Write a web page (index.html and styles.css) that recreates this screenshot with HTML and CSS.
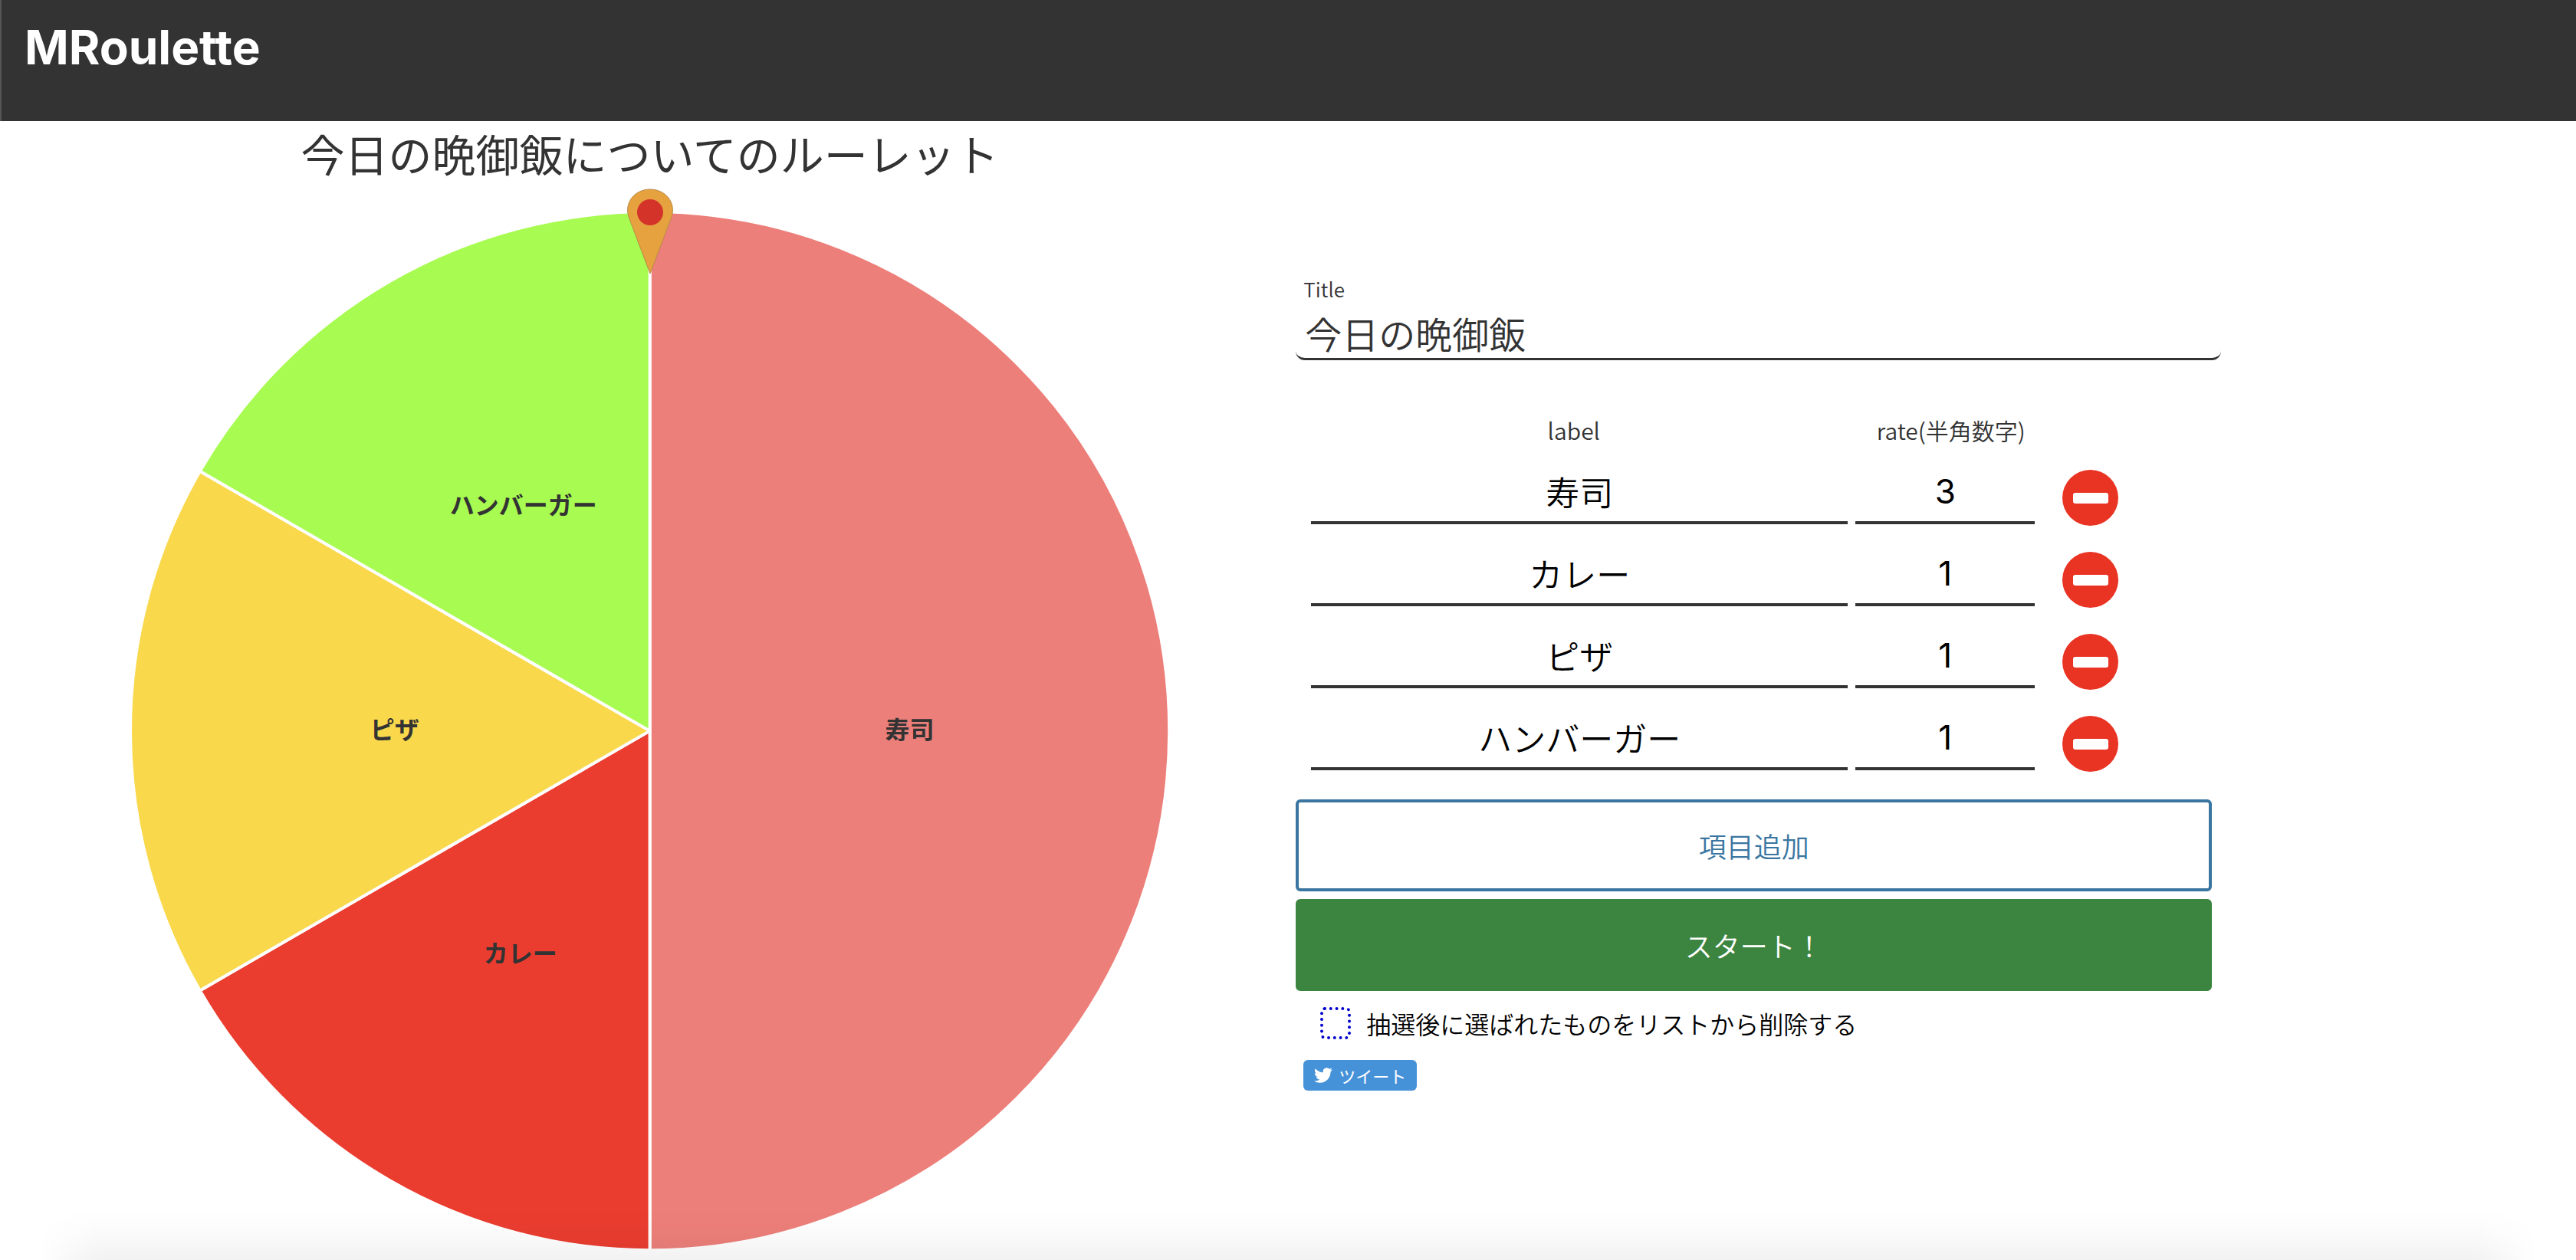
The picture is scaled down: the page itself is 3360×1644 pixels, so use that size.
FILE: index.html
```html
<!DOCTYPE html>
<html lang="ja">
<head>
<meta charset="utf-8">
<meta name="viewport" content="width=device-width, initial-scale=1">
<title>MRoulette</title>
<link rel="stylesheet" href="styles.css">
</head>
<body>
<header class="site-header"><h1 class="brand">MRoulette</h1></header>
<main class="layout">
  <section class="roulette">
    <h2 class="roulette-title">今日の晩御飯についてのルーレット</h2>
    <div class="wheel-box">
      <svg class="wheel" viewBox="0 0 1356 1356" role="img" aria-label="ルーレット">
        <g stroke="#fff" stroke-width="4" stroke-linejoin="bevel">
          <path fill="#ed7f7a" d="M678 678V0A678 678 0 0 1 678 1356Z"/>
          <path fill="#ea3d30" d="M678 678V1356A678 678 0 0 1 90.800 1017Z"/>
          <path fill="#f9d84c" d="M678 678L90.800 1017A678 678 0 0 1 90.800 339Z"/>
          <path fill="#a8fb50" d="M678 678L90.800 339A678 678 0 0 1 678 0Z"/>
        </g>
        <g class="wheel-label">
          <text x="1017" y="688">寿司</text>
          <text x="509" y="981">カレー</text>
          <text x="345" y="688">ピザ</text>
          <text x="513" y="395">ハンバーガー</text>
        </g>
      </svg>
      <svg class="pin" viewBox="0 0 62 112" aria-hidden="true">
        <path d="M31 111L3 37C-3 18 11 1 31 1S65 18 59 37Z" fill="#e5a23e" stroke="#b98a4a" stroke-width="1"/>
        <circle cx="31" cy="31" r="17" fill="#d4332a"/>
      </svg>
    </div>
  </section>
  <form class="settings">
    <label class="title-label" for="title">Title</label>
    <input class="title-input" id="title" type="text" value="今日の晩御飯">
    <table class="items">
      <thead><tr><th class="col-label" scope="col">label</th><th class="col-rate" scope="col">rate(半角数字)</th><td class="col-remove"></td></tr></thead>
      <tbody>
        <tr><td><input class="item-input" type="text" aria-label="label" value="寿司"></td><td><input class="item-input item-rate" type="text" aria-label="rate" value="3"></td><td><button class="remove" type="button" aria-label="削除"></button></td></tr>
        <tr><td><input class="item-input" type="text" aria-label="label" value="カレー"></td><td><input class="item-input item-rate" type="text" aria-label="rate" value="1"></td><td><button class="remove" type="button" aria-label="削除"></button></td></tr>
        <tr><td><input class="item-input" type="text" aria-label="label" value="ピザ"></td><td><input class="item-input item-rate" type="text" aria-label="rate" value="1"></td><td><button class="remove" type="button" aria-label="削除"></button></td></tr>
        <tr><td><input class="item-input" type="text" aria-label="label" value="ハンバーガー"></td><td><input class="item-input item-rate" type="text" aria-label="rate" value="1"></td><td><button class="remove" type="button" aria-label="削除"></button></td></tr>
      </tbody>
    </table>
    <button class="btn btn-add" type="button">項目追加</button>
    <button class="btn btn-start" type="button">スタート！</button>
    <label class="option"><input class="option-check" type="checkbox">抽選後に選ばれたものをリストから削除する</label>
    <a class="tweet" href="#tweet"><svg class="bird" viewBox="0 0 24 24" aria-hidden="true"><path fill="#fff" d="M23.950 4.570a10 10 0 0 1-2.820.770 4.960 4.960 0 0 0 2.160-2.720c-.950.550-2 .950-3.130 1.180a4.920 4.920 0 0 0-8.380 4.480C7.690 8.090 4.070 6.130 1.640 3.160a4.820 4.820 0 0 0-.660 2.470c0 1.710.870 3.210 2.190 4.100a4.900 4.900 0 0 1-2.230-.620v.060a4.920 4.920 0 0 0 3.950 4.830 5 5 0 0 1-2.210.080 4.940 4.940 0 0 0 4.600 3.420A9.870 9.870 0 0 1 0 19.540a14 14 0 0 0 7.550 2.210c9.050 0 14-7.500 14-13.980 0-.210 0-.420-.020-.630a9.940 9.940 0 0 0 2.460-2.550z"/></svg>ツイート</a>
  </form>
</main>
<div class="bottom-shade"></div>
</body>
</html>
```
FILE: styles.css
```css
* { box-sizing: border-box; }

body {
  margin: 0;
  background: #fff;
  color: #333;
  font-family: "Noto Sans CJK JP", sans-serif;
}

.site-header {
  height: 158px;
  padding: 24px 30px;
  background: #333;
  border-left: 2px solid #555;
}

.brand {
  margin: 0;
  color: #fff;
  font: 700 62px/76px Inter, sans-serif;
}

.layout {
  display: grid;
  grid-template-columns: 50.1% 36.1%;
  padding-left: 8px;
}

.roulette-title {
  margin: 0;
  font-size: 57px;
  font-weight: 400;
  line-height: 82px;
  text-align: center;
}

.wheel-box {
  position: relative;
  padding-top: 36px;
}

.wheel {
  display: block;
  width: 80.7%;
  margin: 0 auto;
}

.wheel-label {
  fill: #333;
  font-size: 32px;
  font-weight: 700;
  text-anchor: middle;
}

.pin {
  position: absolute;
  top: 6px;
  left: 50%;
  width: 62px;
  margin-left: -31px;
}

.settings {
  padding: 199px 0 0 3px;
}

.title-label {
  display: block;
  padding-left: 10px;
  font-size: 26px;
  font-weight: 350;
  line-height: 40px;
}

.title-input {
  display: block;
  width: 100%;
  height: 73px;
  padding: 4px 12px 0;
  border: 0;
  border-bottom: 3px solid #333;
  border-radius: 12px;
  background: none;
  color: #333;
  font: 350 48px/66px "Noto Sans CJK JP", sans-serif;
}

.items {
  width: 89.3%;
  margin: 66px 0 19px 15px;
  border-collapse: collapse;
  table-layout: fixed;
}

.items th,
.items td { padding: 0 5px; }

.items th {
  height: 60px;
  padding-bottom: 10px;
  font-size: 30px;
  font-weight: 350;
  line-height: 50px;
}

.items .col-label { padding-right: 20px; }

.items .col-rate {
  width: 244px;
  padding-left: 20px;
}

.col-remove { width: 124px; }

.item-input {
  display: block;
  width: 100%;
  height: 80px;
  margin: 8px 0 20px;
  padding: 0 0 2px;
  border: 0;
  border-bottom: 4px solid #333;
  background: none;
  color: #000;
  font: 350 44px/64px Inter, "Noto Sans CJK JP", sans-serif;
  text-align: center;
}

.item-rate { font-weight: 400; }

.remove {
  display: flex;
  align-items: center;
  justify-content: center;
  width: 73px;
  height: 73px;
  margin: 0 0 0 26px;
  padding: 0;
  border: 0;
  border-radius: 50%;
  background: #e93323;
}

.remove::before {
  content: "";
  width: 46px;
  height: 14px;
  border-radius: 3px;
  background: #fff;
}

.items tbody .item-input { margin-bottom: 19px; }

.btn {
  display: block;
  width: 99%;
  height: 120px;
  margin-bottom: 10px;
  border: 4px solid #3a76a1;
  border-radius: 6px;
  font: 350 36px/52px "Noto Sans CJK JP", sans-serif;
}

.btn-add {
  background: #fff;
  color: #3a76a1;
}

.btn-start {
  border-color: #3c8541;
  background: #3c8541;
  color: #fff;
}

.option {
  display: flex;
  align-items: center;
  gap: 20px;
  padding: 8px 32px 0;
  color: #000;
  font-size: 32px;
  font-weight: 350;
  line-height: 48px;
}

.option-check {
  appearance: none;
  width: 40px;
  height: 42px;
  margin: 0;
  border: 4px dotted #0000cd;
  border-radius: 6px;
}

.tweet {
  display: inline-flex;
  align-items: center;
  gap: 8px;
  height: 40px;
  margin: 24px 0 0 10px;
  padding: 0 14px;
  border-radius: 6px;
  background: #4692d9;
  color: #fff;
  font-size: 22px;
  line-height: 40px;
  text-decoration: none;
}

.bird { width: 24px; }

.bottom-shade {
  position: fixed;
  right: 50px;
  bottom: 0;
  left: 50px;
  height: 64px;
  background: linear-gradient(transparent, rgba(0, 0, 0, .02) 50%, rgba(0, 0, 0, .05));
  mask-image: linear-gradient(90deg, transparent, #000 80px, #000 calc(100% - 80px), transparent);
  pointer-events: none;
}
```
